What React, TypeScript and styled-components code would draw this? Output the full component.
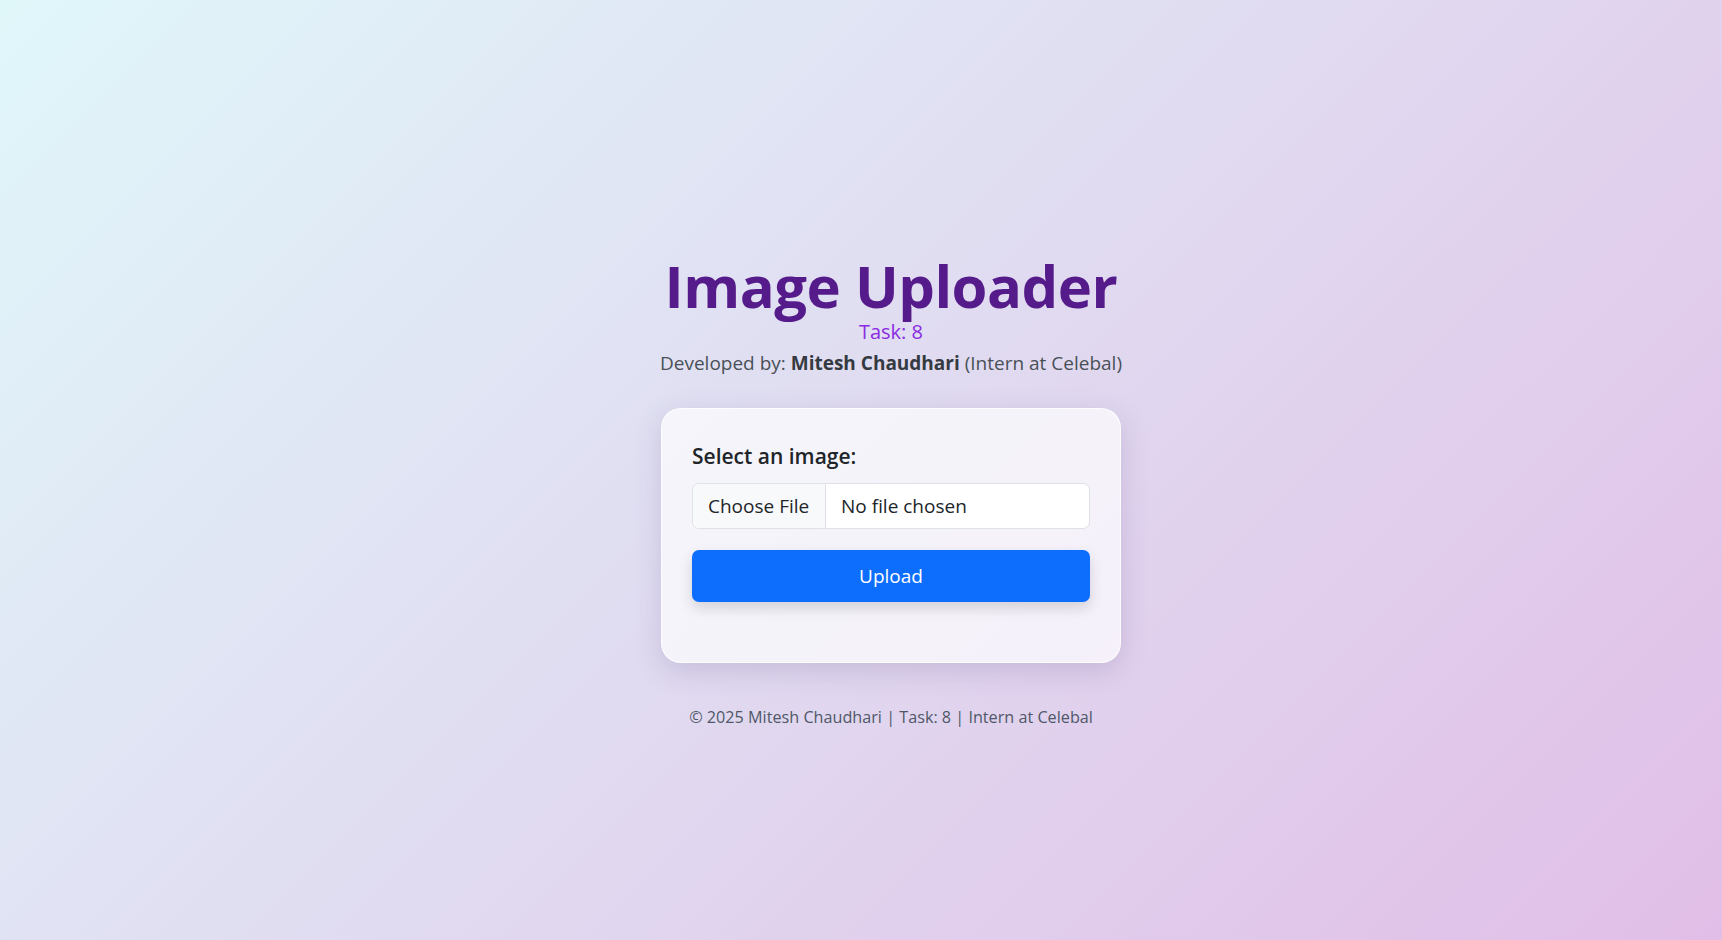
import * as React from "react";
import styled, { createGlobalStyle } from "styled-components";

const GlobalStyle = createGlobalStyle`
  html, body {
    margin: 0;
    padding: 0;
  }
  body {
    font-family: "Open Sans", "Noto Sans", "Liberation Sans", sans-serif;
    color: #212529;
  }
  * {
    box-sizing: border-box;
  }
`;

const Page = styled.div`
  min-height: 100vh;
  background: linear-gradient(135deg, #e0f7fa 0%, #e1bee7 100%);
  display: flex;
  flex-direction: column;
  align-items: center;
  padding: 253px 0 0 60px;
`;

const Header = styled.header`
  display: flex;
  flex-direction: column;
  align-items: center;
  text-align: center;
`;

const Title = styled.h1`
  margin: 0;
  font-size: 58px;
  line-height: 66px;
  font-weight: 700;
  color: #561b8a;
  letter-spacing: -0.5px;
`;

const Task = styled.div`
  font-size: 20px;
  line-height: 26px;
  margin-top: 0;
  color: #8a2be2;
`;

const Credit = styled.p`
  margin: 4px 0 0;
  font-size: 19px;
  line-height: 28px;
  color: #495057;

  strong {
    color: #343a40;
    font-weight: 700;
  }
`;

const Card = styled.form`
  width: 460px;
  margin-top: 31px;
  padding: 33px 30px 60px;
  background: rgba(255, 255, 255, 0.68);
  border: 1px solid rgba(255, 255, 255, 0.8);
  border-radius: 20px;
  box-shadow: 0 8px 28px rgba(80, 60, 120, 0.18);
  display: flex;
  flex-direction: column;
`;

const Label = styled.label`
  font-size: 21px;
  line-height: 28px;
  font-weight: 600;
  color: #212529;
  margin-bottom: 13px;
`;

const FileField = styled.label`
  display: flex;
  height: 46px;
  border: 1px solid #dee2e6;
  border-radius: 7px;
  background: #fff;
  overflow: hidden;
  font-size: 19px;
  color: #212529;
  cursor: pointer;

  input {
    display: none;
  }
`;

const ChooseButton = styled.span`
  display: flex;
  align-items: center;
  width: 133px;
  padding: 0 15px;
  background: #f8f9fa;
  border-right: 1px solid #dee2e6;
  white-space: nowrap;
`;

const FileName = styled.span`
  display: flex;
  align-items: center;
  padding: 0 15px;
  white-space: nowrap;
`;

const UploadButton = styled.button`
  margin-top: 21px;
  height: 52px;
  border: none;
  border-radius: 7px;
  background: #0d6efd;
  color: #fff;
  font-family: inherit;
  font-size: 19px;
  box-shadow: 0 6px 14px rgba(0, 0, 0, 0.14);
  cursor: pointer;
`;

const Footer = styled.footer`
  margin-top: 42px;
  font-size: 16.2px;
  line-height: 24px;
  color: #4f5868;
`;

export default function App() {
  const [fileName, setFileName] = React.useState("No file chosen");

  return (
    <>
      <GlobalStyle />
      <Page>
        <Header>
          <Title>Image Uploader</Title>
          <Task>Task: 8</Task>
          <Credit>
            Developed by: <strong>Mitesh Chaudhari</strong> (Intern at Celebal)
          </Credit>
        </Header>
        <Card onSubmit={(e) => e.preventDefault()}>
          <Label htmlFor="image">Select an image:</Label>
          <FileField>
            <input
              id="image"
              type="file"
              accept="image/*"
              onChange={(e) =>
                setFileName(e.target.files?.[0]?.name || "No file chosen")
              }
            />
            <ChooseButton>Choose File</ChooseButton>
            <FileName>{fileName}</FileName>
          </FileField>
          <UploadButton type="submit">Upload</UploadButton>
        </Card>
        <Footer>© 2025 Mitesh Chaudhari | Task: 8 | Intern at Celebal</Footer>
      </Page>
    </>
  );
}
